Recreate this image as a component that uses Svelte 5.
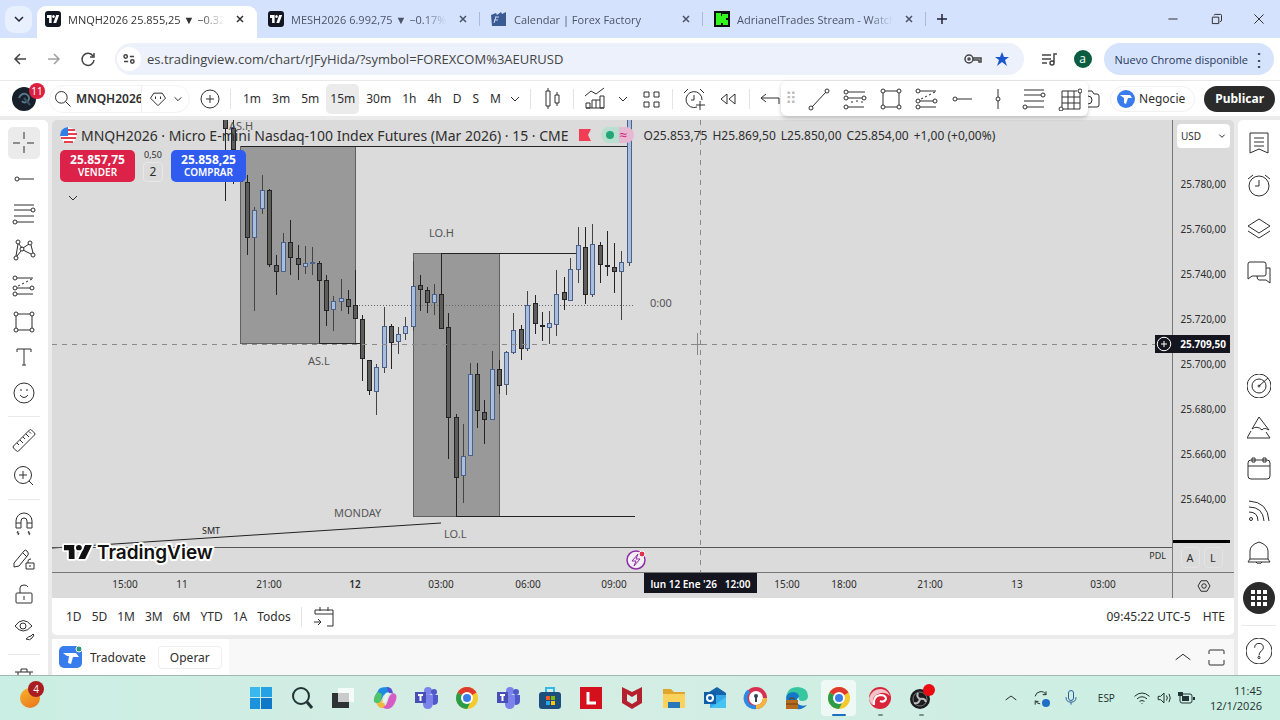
<script lang="ts">
  type Candle = [x: number, high: number, low: number, top: number, bottom: number, up: number];

  const ring = (x: number, y: number, r = 2) =>
    `M${x - r} ${y}a${r} ${r} 0 1 0 ${2 * r} 0a${r} ${r} 0 1 0 ${-2 * r} 0`;

  // stroke icons on a 24px grid
  const ICONS: Record<string, string> = {
    cross: 'M12 1v7M12 15v7M1 12h7M15 12h7',
    hray: 'M7 12h15' + ring(5, 12),
    fib: 'M2 3h20M2 8h17M2 14h20M5 20h17' + ring(21, 8) + ring(3, 20),
    pattern: 'M4 18 6 6M7 6l3 4M11 10l6-4M19 7l2 8M19 16l-8-4M9 13l-4 5' + ring(6, 4) + ring(18, 5) + ring(10, 11) + ring(4, 20) + ring(21, 17),
    projection: 'M5 4h16M5 14h13M5 20h16M6 12l2-1M10 10l2-1M14 8l2-1M18 6l2-1' + ring(3, 4) + ring(3, 14) + ring(20, 14) + ring(3, 20),
    rect: 'M6 4h12M6 20h12M4 6v12M20 6v12' + ring(4, 4) + ring(20, 4) + ring(4, 20) + ring(20, 20),
    text: 'M5 7V4h14v3M12 4v16M10 20h4',
    smile: ring(12, 12, 10) + 'M8 14q4 5 8 0M9 8v2M15 8v2',
    ruler: 'M1.500 18 17.500 2q1-1 2 0l3 3q1 1 0 2l-16 16q-1 1-2 0l-3-3q-1-1 0-2ZM5 15l2 2M8 12l3 3M11 9l2 2M14 6l3 3M17 3.500l2 2',
    zoom: ring(11, 11, 8.5) + 'M17 17l4 4M11 7v8M7 11h8',
    magnet: 'M4 17V10a8 8 0 0 1 16 0v7h-5v-7a3 3 0 0 0-6 0v7ZM4 12h5M15 12h5M6 20l-1 2h2l-1 2M17 20l-1 2h2l-1 2',
    pencil: 'M2 16 12 4q1-2 3 0t1 4L7 19l-5 1ZM11 6l4 4M14 16h8v6h-8ZM16 16v-2q0-2 3-2M18 18v2',
    unlock: 'M5 10h14q1 0 1 1v8q0 1-1 1H5q-1 0-1-1v-8q0-1 1-1ZM8 10V5q0-3 4-3 3 0 4 2M12 13v4',
    eye: 'M3 7q8-11 17 0-9 10-17 0Z' + ring(11, 7, 3) + 'M14 20q3-3 5-3l2-2 1 1-2 3q-2 3-6 1Z',
    trash: 'M3 6h18M9 6V3h6v3M6 6v15h12V6',
    list: 'M3 2h18v20l-9-4-9 4ZM7 7h10M7 11h10M7 15h10',
    alarm: ring(12, 12, 10) + 'M12 6v6H8M1 5l5-4M23 5l-5-4',
    layers: 'M1 9l11-7 11 7-11 7ZM1 14l11 7 11-7',
    chat: 'M3 2h14q2 0 2 2v10q0 2-2 2H5l-4 3V4q0-2 2-2ZM19 8h4v15l-4-3h-7q-2 0-2-4',
    target: ring(12, 12, 12) + ring(12, 12, 7) + ring(12, 12, 1) + 'M12 12l9-8',
    peaks: 'M5 13 12 1l10 13q-5-3-7 0-5-5-10-1ZM4 15l-4 7h23l-4-6',
    calendar: 'M4 3h16q3 0 3 3v13q0 3-3 3H4q-3 0-3-3V6q0-3 3-3ZM1 9h22M5 1h3v4H5ZM16 1h3v4h-3Z',
    feed: ring(4, 20, 1.5) + 'M2 13q9 0 9 9M2 8q14 0 15 14M2 2q19 1 20 20',
    bell: 'M3 19V11q0-6 9-9 9 3 9 9v8l2 3H1l2-3ZM9 22q3 4 6 0M3 19h18',
    help: ring(12, 12, 12) + 'M8 9q0-4 4-4t4 4q0 2-2 3-2 2-2 4' + ring(12, 18, 1),
    trend: 'M5 20 19 5' + ring(4, 21) + ring(20, 4),
    channel: 'M5 5h17M5 11h14M5 20h16M8 15h2M13 14h2M18 15h2' + ring(3, 5) + ring(3, 11) + ring(21, 11) + ring(3, 20),
    vline: 'M12 2v8M12 14v8' + ring(12, 12),
    grid: 'M4 4h15M4 10h18M4 16h18M5 22h17M4 4v16M10 4v18M16 4v18M22 6v16' + ring(22, 4) + ring(3, 22),
    candles: 'M6 4h4v15H6ZM8 1v3M8 19v3M15 8h4v8h-4ZM17 5v3M17 16v3',
    indicators: 'M2 9l6-5 5 3 8-6M3 21v-5h4v5ZM9 21v-8h4v8M13 13h4v8h4V9h-4v4M3 21h18',
    layouts: 'M5 5h5v5H5ZM15 5h5v5h-5ZM5 15h5v5H5ZM15 15h5v5h-5Z',
    addAlarm: 'M15 20a8 8 0 1 1 5-7M12 8v5H9M2 6l4-4M22 6l-4-4M18 14v9M14 18h9',
    rewind: 'M11 7l-6 5 6 5ZM19 7l-6 5 6 5Z',
    undo: 'M8 7l-5 4 5 4M3 11h18v6',
    camera: 'M2 7h5l2-3h6l2 3h3q2 0 2 2v9q0 2-2 2H2Z' + ring(11, 13, 4),
    search: ring(10, 10, 7) + 'M15 15l6 6',
    badge: 'M7 5h10l4 6-9 9-9-9ZM9 9v3M15 9v3',
    down: 'M8 10l4 4 4-4',
    up: 'M4 15l8-6 8 6',
    plus: ring(12, 12, 9) + 'M12 8v8M8 12h8',
    goto: 'M3 9V5h18v16h-6M3 9h18M8 2v4M16 2v4M2 17h7M6 14l3 3-3 3',
    expand: 'M5 9V6q0-1 1-1h3M15 5h4q1 0 1 1v3M20 15v4q0 1-1 1h-4M9 20H6q-1 0-1-1v-4M9 5h6M9 20h6',
    gear: 'M8 5h8l4 7-4 7H8l-4-7Z' + ring(12, 12, 3),
    back: 'M18 12H7M12 7l-5 5 5 5',
    forward: 'M6 12h11M12 7l5 5-5 5',
    reload: 'M17 9a6 6 0 1 0 1 4M18 6v4h-4',
    close: 'M8 8l8 8M16 8l-8 8',
    add: 'M12 7v10M7 12h10',
    minimize: 'M7 12h10',
    restore: 'M8 10h7v7H8ZM10 8q0-1 1-1h6q1 0 1 1v6l-2 1',
    closeWindow: 'M7 7l10 10M17 7 7 17',
    tune: ring(8, 9) + 'M13 9h5' + ring(16, 15) + 'M6 15h5',
    key: ring(9, 12, 4) + ring(9, 12, 1) + 'M13 11h8v4h-2v-2h-6',
    queue: 'M5 8h9M5 12h9M5 16h5M17 16V7h3' + ring(15, 16, 2),
    sync: 'M5 10a7 7 0 0 1 13-2M18 4v4h-4M5 20v-4h4M5 15a7 7 0 0 0 6 4',
    mic: 'M9 6a3 3 0 0 1 6 0v6a3 3 0 0 1-6 0ZM6 11q0 6 6 6t6-6M12 17v3',
    wifi: 'M3 10q9-8 18 0M6 13q6-5 12 0M9 16q3-2 6 0M12 18v1',
    volume: 'M5 10h3l4-4v12l-4-4H5ZM15 9q2 3 0 6M18 7q3 5 0 10',
  };

  const tabs = [
    { title: 'MNQH2026 25.855,25 ▼ −0.32%', kind: 'tv' },
    { title: 'MESH2026 6.992,75 ▼ −0.17%', kind: 'tv' },
    { title: 'Calendar | Forex Factory', kind: 'ff' },
    { title: 'AdrianelTrades Stream - Watch', kind: 'kick' },
  ];
  const intervals = ['1m', '3m', '5m', '15m', '30m', '1h', '4h', 'D', 'S', 'M'];
  const favorites = ['trend', 'channel', 'rect', 'projection', 'hray', 'vline', 'fib', 'grid'];
  const drawing = ['cross', 'hray', 'fib', 'pattern', 'projection', 'rect', 'text', 'smile'];
  const measure = ['ruler', 'zoom'];
  const locks = ['magnet', 'pencil', 'unlock', 'eye'];
  const widgetsTop = ['list', 'alarm', 'layers', 'chat'];
  const widgetsBottom = ['target', 'peaks', 'calendar', 'feed', 'bell'];
  const prices = ['25.780,00', '25.760,00', '25.740,00', '25.720,00', '25.700,00', '25.680,00', '25.660,00', '25.640,00'];
  const ranges = ['1D', '5D', '1M', '3M', '6M', 'YTD', '1A', 'Todos'];
  const times: [number, string][] = [
    [73, '15:00'], [130, '11'], [217, '21:00'], [303, '12'], [389, '03:00'], [476, '06:00'],
    [562, '09:00'], [735, '15:00'], [792, '18:00'], [878, '21:00'], [965, '13'], [1051, '03:00'],
  ];
  const apps = ['windows', 'search', 'tasks', 'copilot', 'teams', 'chrome', 'teams', 'store', 'lenovo', 'mcafee',
    'folder', 'outlook', 'lock', 'edge', 'chrome', 'swirl', 'obs'];

  const candles: Candle[] = [
    [173, -2, 81, -2, 9, 0], [181, 0, 64, 8, 30, 0], [188, 35, 62, 40, 62, 0], [195, 55, 135, 62, 118, 0],
    [202, 87, 191, 90, 118, 1], [210, 55, 94, 70, 89, 1], [217, 69, 147, 70, 145, 0], [224, 135, 175, 145, 152, 0],
    [231, 113, 152, 122, 152, 1], [238, 100, 155, 122, 138, 0], [246, 125, 160, 138, 145, 0], [253, 126, 154, 143, 147, 1],
    [260, 127, 155, 142, 144, 1], [267, 141, 161, 143, 161, 0], [274, 155, 206, 160, 191, 0], [281, 176, 211, 181, 190, 1],
    [289, 159, 191, 178, 182, 1], [296, 170, 194, 179, 187, 0], [303, 150, 199, 185, 199, 0], [310, 195, 261, 199, 239, 0],
    [317, 240, 275, 240, 271, 0], [324, 244, 295, 247, 272, 1], [332, 187, 253, 206, 248, 1], [339, 204, 249, 206, 223, 0],
    [346, 207, 234, 214, 222, 1], [353, 197, 220, 206, 214, 1], [361, 141, 211, 166, 207, 1], [368, 155, 191, 165, 170, 0],
    [375, 167, 193, 170, 183, 0], [382, 164, 195, 174, 183, 1], [389, 133, 209, 174, 209, 0], [396, 193, 339, 207, 298, 0],
    [404, 294, 397, 297, 358, 0], [411, 304, 383, 336, 356, 1], [418, 243, 336, 254, 336, 1], [425, 243, 308, 254, 291, 0],
    [432, 280, 324, 292, 300, 0], [440, 231, 300, 249, 300, 1], [447, 240, 274, 249, 266, 0], [454, 231, 275, 232, 265, 1],
    [461, 193, 234, 210, 233, 1], [469, 205, 240, 209, 229, 0], [475, 171, 231, 185, 229, 1], [483, 175, 214, 183, 204, 0],
    [490, 192, 221, 205, 207, 0], [497, 191, 224, 203, 208, 1], [504, 150, 216, 174, 205, 1], [512, 157, 190, 172, 180, 0],
    [518, 138, 181, 149, 181, 1], [526, 107, 163, 125, 150, 1], [533, 107, 184, 127, 175, 0], [540, 104, 177, 124, 175, 1],
    [548, 122, 163, 125, 145, 0], [555, 111, 156, 145, 147, 0], [562, 123, 173, 147, 152, 0], [569, 131, 200, 142, 152, 1],
    [577, -4, 146, -4, 143, 1],
  ];

  let interval = $state('15m');
  let url = $state('es.tradingview.com/chart/rJFyHida/?symbol=FOREXCOM%3AEURUSD');
  let currency = $state('USD');
</script>

{#snippet icon(name: string, size = 24)}
  <svg class="icon" width={size} height={size} viewBox="0 0 24 24" aria-hidden="true"><path d={ICONS[name]} /></svg>
{/snippet}

{#snippet tvMark()}
  <path d="M0 0h11v16H5V6H0ZM22 0h7l-7 16h-7Z" /><circle cx="15.500" cy="3" r="3" />
{/snippet}

{#snippet favicon(kind: string)}
  <svg class="favicon" width="16" height="16" viewBox="0 0 16 16" aria-hidden="true">
    {#if kind === 'tv'}
      <rect width="16" height="16" rx="3" fill="#131722" />
      <g fill="#fff" transform="translate(2 4) scale(.42 .5)">{@render tvMark()}</g>
    {:else if kind === 'ff'}
      <path d="M0 4l5-2 1 2 4-3 1 2 4-2v14H1Z" fill="#3b5a94" />
      <path d="M4 6h4M3 9h4M5 6l-2 6" stroke="#c9d6f0" fill="none" />
    {:else}
      <rect width="16" height="16" fill="#0b0f0b" />
      <path d="M2 2h5v3h1V3h6v4h-2v2h2v5H9v-2H7v2H2Z" fill="#31f51c" />
    {/if}
  </svg>
{/snippet}

{#snippet app(kind: string)}
  <svg class="app-icon" width="24" height="24" viewBox="0 0 24 24" aria-hidden="true">
    {#if kind === 'windows'}
      <path d="M1 1h10v10H1Z" fill="#39b8ef" /><path d="M12 1h11v10H12Z" fill="#23a3e4" />
      <path d="M1 12h10v11H1Z" fill="#1b92dc" /><path d="M12 12h11v11H12Z" fill="#0f78c8" />
    {:else if kind === 'search'}
      <circle cx="11" cy="10" r="8" fill="none" stroke="#233" stroke-width="2" />
      <path d="M17 16l5 6" stroke="#233" stroke-width="3" />
    {:else if kind === 'tasks'}
      <path d="M1 7h17v15H1Z" fill="#2d3433" /><path d="M7 2h16v14H7Z" fill="#fff" opacity=".75" />
    {:else if kind === 'copilot'}
      <path d="M6 3q2-2 8-2 3 0 4 4l-5 2q-3 2-4 6-2 4-5 3-4-1-2-6Z" fill="#1c8de0" />
      <path d="M1 13q1-5 4-7l4 2-1 7q-2 3-5 2-3-1-2-4Z" fill="#4fc46a" />
      <path d="M3 17q5 1 6-4l4 8q-5 3-8-1Z" fill="#f4b73e" />
      <path d="M10 21q3 0 5-7 1-5 5-7 5 1 3 7-3 9-9 9-3 0-4-2Z" fill="#d75bc4" />
      <path d="M14 1q5 0 6 6-3 1-5-1Z" fill="#574fd0" />
      <path d="M13 7l3 0-3 9-4 1Z" fill="#e8f4f0" />
    {:else if kind === 'teams'}
      <circle cx="14" cy="5" r="4" fill="#7b83eb" /><circle cx="20" cy="6" r="3" fill="#5059c9" />
      <path d="M9 9h10v9q-1 5-5 5-5 0-5-5Z" fill="#7b83eb" /><path d="M19 9h5v6q0 4-5 4Z" fill="#5059c9" />
      <path d="M1 6h11v11H1Z" fill="#464eb8" /><path d="M4 9h5M6.500 9v6" stroke="#fff" stroke-width="2" />
    {:else if kind === 'chrome'}
      <circle cx="12" cy="12" r="11" fill="#f6c92d" />
      <path d="M12 12 2.500 6.500a11 11 0 0 1 19 0Z" fill="#e0392d" />
      <path d="M12 12 2.500 6.500A11 11 0 0 0 12 23l4-8Z" fill="#2b9c4a" />
      <circle cx="12" cy="12" r="6" fill="#fff" /><circle cx="12" cy="12" r="4" fill="#3b7de8" />
    {:else if kind === 'store'}
      <path d="M8 6V2h8v4" fill="none" stroke="#37b7e8" stroke-width="2" /><rect x="1" y="6" width="22" height="17" rx="3" fill="#1d4f7c" />
      <path d="M8 10h4v4H8Z" fill="#f05a28" /><path d="M13 10h4v4h-4Z" fill="#7fba00" /><path d="M8 15h4v4H8Z" fill="#2aa7e8" /><path d="M13 15h4v4h-4Z" fill="#ffc20e" />
    {:else if kind === 'lenovo'}
      <path d="M1 1h22v22H1Z" fill="#d3101c" /><path d="M9 6v11h8" fill="none" stroke="#fff" stroke-width="3" />
    {:else if kind === 'mcafee'}
      <path d="M2 1l10 5 10-5v16l-10 6-10-6Z" fill="#b5202f" /><path d="M7 8l5 3 5-3v7l-5 3-5-3Z" fill="#d5efe5" />
    {:else if kind === 'folder'}
      <path d="M1 3h8l3 3h11v15H1Z" fill="#e0a52c" /><path d="M1 8h22v14H1Z" fill="#fbd25c" /><path d="M6 16h12v6H6Z" fill="#2678b8" />
    {:else if kind === 'outlook'}
      <path d="M6 6l8-5 9 6v5H6Z" fill="#1563a8" /><path d="M7 9h16v13H7Z" fill="#35a7e8" /><path d="M7 22l16-11v11Z" fill="#46c3f2" />
      <path d="M1 6h12v12H1Z" fill="#0f5ea8" /><circle cx="7" cy="12" r="3" fill="none" stroke="#fff" stroke-width="2" />
    {:else if kind === 'lock'}
      <circle cx="12" cy="12" r="9" fill="#fff" stroke="#d8304e" stroke-width="4" />
      <path d="M5 5a9 9 0 0 0 7 16" fill="none" stroke="#2f89e3" stroke-width="4" /><path d="M12 21a9 9 0 0 0 9-9" fill="none" stroke="#f5b63c" stroke-width="4" />
      <circle cx="12" cy="10" r="2" fill="#345" /><path d="M12 11v5" stroke="#345" stroke-width="2" />
    {:else if kind === 'edge'}
      <path d="M1 12Q2 1 13 1q10 1 10 9 0 5-6 5-4 0-3-4-4-5-13 1Z" fill="#36c6a0" />
      <path d="M1 12q1-6 8-6 5 1 5 5-4 3-1 7 4 3 9 1-4 5-11 4Q1 21 1 12Z" fill="#1677c8" />
      <path d="M1 14h12v9H1Z" fill="#b56b1e" /><path d="M1 18h12M5 14v-2h4v2" stroke="#6b3b12" fill="none" />
    {:else if kind === 'swirl'}
      <circle cx="12" cy="12" r="11" fill="#d9243a" />
      <path d="M1 12Q4 3 13 3q7 1 9 7-4-4-9-3-9 1-8 12-4-3-4-7Z" fill="#f3c4c9" />
      <path d="M6 19q-1-9 6-10 6 0 6 4-2 4-6 2" fill="none" stroke="#fff" stroke-width="2" />
    {:else}
      <circle cx="11" cy="13" r="10" fill="#1c1c1f" /><circle cx="11" cy="13" r="7" fill="none" stroke="#777" />
      <path d="M11 13q-4-2-2-6M11 13q5-1 6 3M11 13q-1 5-6 4" stroke="#bbb" stroke-width="2" fill="none" />
      <circle cx="20" cy="4" r="6" fill="#ec0b12" />
    {/if}
  </svg>
{/snippet}

<div class="screen">
  <header class="tab-strip">
    <button class="tab-search" aria-label="Buscar pestañas">{@render icon('down')}</button>
    <div class="tabs">
      {#each tabs as tab, i}
        <div class="tab" class:active={i === 0}>
          {@render favicon(tab.kind)}
          <span class="tab-title">{tab.title}</span>
          <button class="bare" aria-label="Cerrar pestaña">{@render icon('close', 18)}</button>
        </div>
      {/each}
    </div>
    <button class="bare new-tab" aria-label="Nueva pestaña">{@render icon('add')}</button>
    <div class="window-buttons">
      <button class="bare" aria-label="Minimizar">{@render icon('minimize', 22)}</button>
      <button class="bare" aria-label="Restaurar">{@render icon('restore', 22)}</button>
      <button class="bare" aria-label="Cerrar">{@render icon('closeWindow', 22)}</button>
    </div>
  </header>

  <div class="address-bar">
    <div class="nav-buttons">
      <button class="bare" aria-label="Atrás">{@render icon('back')}</button>
      <button class="bare faded" aria-label="Adelante">{@render icon('forward')}</button>
      <button class="bare" aria-label="Recargar">{@render icon('reload')}</button>
    </div>
    <div class="omnibox">
      <span class="site-info">{@render icon('tune', 20)}</span>
      <input aria-label="Dirección" bind:value={url} spellcheck="false" />
      <button class="bare" aria-label="Contraseñas">{@render icon('key')}</button>
      <button class="bare star" aria-label="Marcador">
        <svg width="16" height="16" viewBox="0 0 16 16"><path d="M8 1l2 5h5l-4 3 2 6-5-4-5 4 2-6-4-3h5Z" fill="#1a56d0" /></svg>
      </button>
    </div>
    <button class="bare" aria-label="Multimedia">{@render icon('queue')}</button>
    <button class="profile" aria-label="Perfil">a</button>
    <button class="update">Nuevo Chrome disponible <span class="kebab">⋮</span></button>
  </div>

  <div class="toolbar">
    <button class="bare avatar" aria-label="Menú">
      <svg width="26" height="26" viewBox="0 0 26 26"><circle cx="13" cy="13" r="12" fill="#17202a" /><path d="M8 12q2-5 7-4 5 3 2 7-4 3-6 0" stroke="#56748a" fill="none" stroke-width="2" /><path d="M13 12l6 7" stroke="#3a5264" stroke-width="2" /></svg>
      <span class="count">11</span>
    </button>
    <div class="symbol-pill">
      <button class="bare symbol">{@render icon('search', 20)}<span>MNQH2026</span></button>
      <button class="bare compare" aria-label="Listas">{@render icon('badge', 20)}{@render icon('down', 20)}</button>
    </div>
    <button class="bare" aria-label="Comparar">{@render icon('plus')}</button>
    <i class="sep"></i>
    <div class="intervals">
      {#each intervals as item}
        <button class="bare interval" class:selected={item === interval} onclick={() => (interval = item)}>{item}</button>
      {/each}
      <button class="bare chevron" aria-label="Más intervalos">{@render icon('down')}</button>
    </div>
    <i class="sep"></i>
    <button class="bare mid" aria-label="Velas">{@render icon('candles')}</button>
    <i class="sep"></i>
    <button class="bare mid" aria-label="Indicadores">{@render icon('indicators')}</button>
    <button class="bare chevron" aria-label="Favoritos">{@render icon('down')}</button>
    <button class="bare mid" aria-label="Plantillas">{@render icon('layouts')}</button>
    <i class="sep"></i>
    <button class="bare mid" aria-label="Alerta">{@render icon('addAlarm')}</button>
    <button class="bare mid" aria-label="Reproducción">{@render icon('rewind')}</button>
    <i class="sep"></i>
    <button class="bare" aria-label="Deshacer">{@render icon('undo')}</button>
    <div class="toolbar-right">
      <button class="bare" aria-label="Instantánea">{@render icon('camera')}</button>
      <button class="trade">
        <svg width="18" height="18" viewBox="0 0 18 18"><circle cx="9" cy="9" r="9" fill="#387ced" /><path d="M3 5h10l2 3h-4l-2 6-2-1V8Z" fill="#fff" /></svg>
        Negocie
      </button>
      <button class="publish">Publicar</button>
    </div>
    <div class="favorites">
      <span class="grip">⠿</span>
      {#each favorites as name}
        <button class="bare" aria-label={name}>{@render icon(name)}</button>
      {/each}
    </div>
  </div>

  <main class="workspace">
    <nav class="rail">
      <div class="rail-group drawing">
        {#each drawing as name, i}
          <button class="bare tool" class:selected={i === 0} aria-label={name}>{@render icon(name)}</button>
        {/each}
      </div>
      <div class="rail-group">
        {#each measure as name}
          <button class="bare tool" aria-label={name}>{@render icon(name)}</button>
        {/each}
      </div>
      <div class="rail-group">
        {#each locks as name}
          <button class="bare tool" aria-label={name}>{@render icon(name)}</button>
        {/each}
      </div>
      <div class="rail-group">
        <button class="bare tool" aria-label="trash">{@render icon('trash')}</button>
      </div>
    </nav>

    <div class="center">
      <section class="chart">
        <div class="plot">
          <svg class="canvas" width="100%" height="100%" aria-label="MNQH2026 15m">
            <rect class="zone" x="188.500" y="26.500" width="115" height="197" />
            <rect class="zone" x="361.500" y="133.500" width="86" height="263" />
            <g class="levels">
              <path d="M189 26.500H577M267.500 161v62.500H311M389.500 174v-40.500H526M404 396.500H583" />
              <path d="M0 428 389 403" />
            </g>
            <path class="dotted" d="M304 185.500H583" />
            {#each candles as [x, high, low, top, bottom, up]}
              <g class={up ? 'up' : 'down'}>
                <path d="M{x + 0.5} {high}V{low}" />
                <rect x={x - 1.5} y={top + 0.5} width="4" height={Math.max(bottom - top - 1, 1)} />
              </g>
            {/each}
            <line class="pdl" x1="0" x2="100%" y1="427.500" y2="427.500" />
            <line class="cursor" x1="0" x2="100%" y1="224.500" y2="224.500" />
            <line class="cursor" x1="648.500" x2="648.500" y1="0" y2="100%" />
            <path class="cross" d="M639 224.500h12M645.500 213v22" />
            <g class="labels">
              <text x="177" y="10">AS.H</text>
              <text x="256" y="245">AS.L</text>
              <text x="377" y="117">LO.H</text>
              <text x="392" y="418">LO.L</text>
              <text x="282" y="397">MONDAY</text>
              <text x="598" y="187">0:00</text>
              <text class="small" x="150" y="414">SMT</text>
            </g>
            <g class="brand">
              <g transform="translate(12 425) scale(.96 .88)">{@render tvMark()}</g>
              <text x="45" y="439">TradingView</text>
            </g>
            <g transform="translate(584 440)">
              <circle r="9" fill="#f4eef6" stroke="#8d2fa5" stroke-width="1.500" />
              <path d="M2-6l-6 7h4l-2 5 6-7H0Z" fill="none" stroke="#8d2fa5" />
              <circle cx="6" cy="-6" r="3" fill="#e0304f" stroke="#fff" />
            </g>
          </svg>
          <span class="pdl-tag">PDL</span>
          <div class="legend">
            <div class="legend-row">
              <svg width="17" height="17" viewBox="0 0 17 17">
                <circle cx="8.500" cy="8.500" r="8" fill="#fff" />
                <path d="M8 3h7M8 7h9M1 11h15M4 15h9" stroke="#e5404d" stroke-width="2" />
                <path d="M8 0v9H0Q0 1 8 0Z" fill="#2f7fe6" />
              </svg>
              <h1>MNQH2026 · Micro E-mini Nasdaq-100 Index Futures (Mar 2026) · 15 · CME</h1>
              <svg class="flag" width="12" height="12" viewBox="0 0 12 12"><path d="M0 0h12L9 6l3 6H0Z" fill="#f23d55" /></svg>
              <span class="status"><b></b><em>≈</em></span>
              <p class="ohlc">
                <span>O25.853,75</span><span>H25.869,50</span><span>L25.850,00</span><span>C25.854,00</span><span>+1,00 (+0,00%)</span>
              </p>
            </div>
            <div class="legend-row orders">
              <button class="order sell"><strong>25.857,75</strong>VENDER</button>
              <div class="spread"><span>0,50</span><button class="qty">2</button></div>
              <button class="order buy"><strong>25.858,25</strong>COMPRAR</button>
            </div>
            <button class="bare collapse" aria-label="Contraer">{@render icon('down')}</button>
          </div>
        </div>

        <aside class="price-axis">
          <label class="currency">
            <select aria-label="Moneda" bind:value={currency}><option>USD</option></select>
            {@render icon('down', 16)}
          </label>
          <ul>
            {#each prices as price}<li>{price}</li>{/each}
          </ul>
          <div class="cursor-price">{@render icon('plus', 18)}<span>25.709,50</span></div>
          <div class="axis-modes"><button>A</button><button>L</button></div>
        </aside>

        <div class="time-axis">
          <svg width="100%" height="26">
            {#each times as [x, label]}
              <text {x} y="15" class:day={label === '12'}>{label}</text>
            {/each}
          </svg>
          <span class="cursor-time">lun 12 Ene '26 &nbsp; 12:00</span>
        </div>
        <div class="axis-settings">
          <button class="bare" aria-label="Ajustes">{@render icon('gear', 18)}</button>
        </div>
      </section>

      <div class="range-bar">
        {#each ranges as range}<button class="bare">{range}</button>{/each}
        <i class="sep"></i>
        <button class="bare" aria-label="Ir a">{@render icon('goto')}</button>
        <button class="bare clock">09:45:22 UTC-5</button>
        <button class="bare">HTE</button>
      </div>

      <div class="broker-bar">
        <div class="broker">
          <span class="broker-logo">
            <svg width="24" height="24" viewBox="0 0 24 24"><rect y="1" width="23" height="22" rx="5" fill="#387ced" /><path d="M4 8h13l3 4h-6l-2 7-3-1 1-7H8Z" fill="#fff" /><circle cx="20" cy="4" r="3" fill="#2a9b76" stroke="#fff" /></svg>
          </span>
          <span>Tradovate</span>
          <button class="operate">Operar</button>
        </div>
        <div class="broker-actions">
          <button class="bare" aria-label="Abrir panel">{@render icon('up', 22)}</button>
          <button class="bare" aria-label="Maximizar">{@render icon('expand', 24)}</button>
        </div>
      </div>
    </div>

    <nav class="widgets">
      <div class="widget-group top">
        {#each widgetsTop as name}<button class="bare" aria-label={name}>{@render icon(name)}</button>{/each}
      </div>
      <div class="widget-group bottom">
        {#each widgetsBottom as name}<button class="bare" aria-label={name}>{@render icon(name)}</button>{/each}
        <button class="bare" aria-label="Productos">
          <svg width="32" height="32" viewBox="0 0 32 32"><circle cx="16" cy="16" r="16" fill="#2b2b2b" /><path d="M8 8h4v4H8ZM14 8h4v4h-4ZM20 8h4v4h-4ZM8 14h4v4H8ZM14 14h4v4h-4ZM20 14h4v4h-4ZM8 20h4v4H8ZM14 20h4v4h-4ZM20 20h4v4h-4Z" fill="#fff" /></svg>
        </button>
      </div>
      <button class="bare help" aria-label="Ayuda">{@render icon('help', 26)}</button>
    </nav>
  </main>

  <footer class="taskbar">
    <div class="weather">
      <button class="bare weather-button" aria-label="Widgets"><span class="sun"></span><span class="count">4</span></button>
    </div>
    <div class="apps">
      {#each apps as kind, i}
        <button class="bare app" class:current={i === 14} class:running={i > 14} aria-label={kind}>{@render app(kind)}</button>
      {/each}
    </div>
    <div class="tray">
      <button class="bare" aria-label="Iconos ocultos">{@render icon('up', 16)}</button>
      <span class="sync">{@render icon('sync', 20)}</span>
      <span class="mic">{@render icon('mic', 20)}</span>
      <span class="lang">ESP</span>
      <span class="status-icons">
        {@render icon('wifi', 20)}{@render icon('volume', 20)}
        <svg width="20" height="16" viewBox="0 0 20 16"><rect x="4" y="4" width="12" height="9" rx="2" fill="none" stroke="#233" /><path d="M6 6h7v5H6ZM17 7h2v3h-2ZM2 2h5v4H2Z" fill="#233" /></svg>
      </span>
      <time>11:45<br />12/1/2026</time>
    </div>
  </footer>
</div>

<style>
  :global(body) {
    background: #ebebeb;
  }

  .screen {
    height: 100vh;
    display: flex;
    flex-direction: column;
    overflow: hidden;
    background: #ebebeb;
    font-family: "Noto Sans", "Open Sans", sans-serif;
    font-size: 12px;
    color: #2e2e2e;
  }

  button, input, select {
    font: inherit;
    color: inherit;
    border: 0;
    margin: 0;
    padding: 0;
    cursor: pointer;
  }

  .bare {
    background: none;
    display: flex;
    align-items: center;
    justify-content: center;
    flex: none;
  }

  .icon {
    flex: none;
    fill: none;
    stroke: currentColor;
    stroke-width: 1;
  }

  .icon path { vector-effect: non-scaling-stroke; }

  .sep {
    width: 1px;
    height: 20px;
    background: #e4e4e4;
    flex: none;
  }

  /* browser */
  .tab-strip {
    height: 38px;
    flex: none;
    display: flex;
    align-items: center;
    background: #d5e2fd;
    font-family: "Open Sans", "Noto Sans", sans-serif;
    font-size: 11px;
    color: #4a5468;
  }

  .tab-search {
    width: 27px;
    height: 27px;
    margin: 0 5px;
    display: grid;
    place-items: center;
    border-radius: 9px;
    background: #e8f0fe;
    color: #223;
  }

  .tabs {
    display: flex;
    gap: 3px;
    align-self: flex-end;
  }

  .tab {
    width: 220px;
    height: 32px;
    box-sizing: border-box;
    padding: 0 8px 6px;
    display: flex;
    align-items: center;
    gap: 7px;
    position: relative;
  }

  .tab.active {
    background: #fff;
    border-radius: 9px 9px 0 0;
    color: #333;
  }

  .tab:not(.active)::after {
    content: '';
    position: absolute;
    right: 0;
    width: 1px;
    height: 14px;
    background: #a9bbdd;
  }

  .favicon { flex: none; }

  .tab-title {
    flex: 1;
    min-width: 0;
    overflow: hidden;
    white-space: nowrap;
    mask-image: linear-gradient(90deg, #000 85%, transparent);
  }

  .tab-strip .icon { stroke-width: 1.5px; }
  .new-tab { margin-left: 4px; color: #223; }

  .window-buttons {
    display: flex;
    gap: 21px;
    margin: 0 10px 0 auto;
    color: #333;
  }

  .window-buttons .icon { stroke-width: 1px; }

  .address-bar {
    height: 42px;
    flex: none;
    display: flex;
    align-items: center;
    gap: 10px;
    padding: 0 6px 0 8px;
    background: #fff;
    border-bottom: 1px solid #e8e8e8;
    font-family: "Open Sans", "Noto Sans", sans-serif;
    color: #444;
  }

  .address-bar .icon { stroke-width: 1.5px; }

  .nav-buttons {
    display: flex;
    gap: 10px;
  }

  .faded { opacity: 0.5; }

  .omnibox {
    flex: 1;
    height: 32px;
    display: flex;
    align-items: center;
    gap: 6px;
    margin: 0 3px 0 5px;
    padding: 0 14px 0 2px;
    border-radius: 16px;
    background: #ecf1fc;
  }

  .site-info {
    width: 24px;
    height: 24px;
    display: grid;
    place-items: center;
    border-radius: 50%;
    background: #fff;
  }

  .omnibox input {
    flex: 1;
    background: none;
    outline: none;
    font-size: 13px;
    cursor: text;
  }

  .star { margin-left: 4px; }

  .profile {
    width: 18px;
    height: 18px;
    margin: 0 2px 0 3px;
    border-radius: 50%;
    background: #0b5c41;
    color: #fff;
    line-height: 16px;
  }

  .update {
    height: 32px;
    display: flex;
    align-items: center;
    gap: 9px;
    padding: 0 13px 0 11px;
    border-radius: 16px;
    background: #d5e3fd;
    color: #2a3a5c;
    font-size: 11px;
  }

  .kebab {
    width: 4px;
    display: flex;
    justify-content: center;
    font-size: 18px;
    line-height: 20px;
  }

  /* chart toolbar */
  .toolbar {
    height: 35px;
    flex: none;
    display: flex;
    align-items: center;
    gap: 8px;
    padding: 0 5px 0 11px;
    margin-bottom: 4px;
    background: #fff;
    position: relative;
  }

  .avatar { position: relative; }

  .count {
    position: absolute;
    top: -3px;
    left: 18px;
    width: 16px;
    height: 16px;
    border-radius: 50%;
    background: #dc2040;
    color: #fff;
    font-size: 10px;
    line-height: 16px;
    text-align: center;
  }

  .symbol-pill {
    width: 141px;
    height: 28px;
    box-sizing: border-box;
    display: flex;
    align-items: center;
    margin-left: 4px;
    padding-left: 3px;
    border: 1px solid #f3f3f3;
    border-radius: 14px;
  }

  .symbol {
    width: 89px;
    height: 28px;
    gap: 3px;
    overflow: hidden;
    justify-content: flex-start;
    border-right: 1px solid #eee;
    font-weight: 600;
  }

  .compare { padding-left: 6px; }

  .intervals {
    display: flex;
    align-items: center;
    gap: 3px;
  }

  .interval {
    height: 30px;
    padding: 0 4px;
    border-radius: 5px;
  }

  .interval.selected { background: #ebebeb; }
  .chevron { width: 14px; }
  .mid { margin: 0 1px; }

  .toolbar-right {
    display: flex;
    align-items: center;
    gap: 9px;
    margin-left: auto;
  }

  .trade {
    height: 26px;
    display: flex;
    align-items: center;
    gap: 4px;
    padding: 0 9px 0 6px;
    border: 1px solid #f1f1f1;
    border-radius: 14px;
    background: #fff;
  }

  .publish {
    height: 26px;
    padding: 0 11px;
    border-radius: 13px;
    background: #2b2b2b;
    color: #fff;
    font-weight: 700;
  }

  .favorites {
    position: absolute;
    z-index: 2;
    top: 0;
    left: 781px;
    width: 307px;
    height: 35px;
    box-sizing: border-box;
    padding-left: 4px;
    display: flex;
    align-items: center;
    border-radius: 6px;
    background: #fff;
    box-shadow: 0 2px 4px #0003;
  }

  .favorites .bare { flex: 1; }

  .grip {
    width: 16px;
    color: #bbb;
    font-family: "DejaVu Sans", sans-serif;
    font-size: 16px;
  }

  /* workspace */
  .workspace {
    flex: 1;
    min-height: 0;
    display: grid;
    grid-template-columns: 48px minmax(0, 1fr) 42px;
    gap: 4px;
  }

  .rail {
    overflow: hidden;
    padding: 7px 8px 0;
    background: #fff;
    border-radius: 0 5px 0 0;
  }

  .rail-group {
    display: flex;
    flex-direction: column;
    gap: 4px;
    padding-bottom: 7px;
    margin-bottom: 7px;
    border-bottom: 1px solid #e8e8e8;
  }

  .drawing {
    height: 282px;
    justify-content: space-between;
    gap: 0;
  }

  .tool {
    height: 32px;
    border-radius: 5px;
  }

  .tool.selected { background: #ebebeb; }

  .center {
    min-height: 0;
    display: flex;
    flex-direction: column;
  }

  .chart {
    flex: 1;
    min-height: 0;
    display: grid;
    grid-template-columns: minmax(0, 1fr) 62px;
    grid-template-rows: minmax(0, 1fr) 26px;
    background: #dbdbdb;
    border-radius: 5px 5px 0 0;
  }

  .plot { position: relative; overflow: hidden; }
  .canvas { display: block; }
  .zone { fill: #999; stroke: #606060; }
  .levels { fill: none; stroke: #222; }
  .dotted { stroke: #666; stroke-dasharray: 1 2; }
  .up { fill: #a9bddd; stroke: #4b618a; }
  .up path { stroke: #444; }
  .down { fill: #5d5d5b; stroke: #242424; }
  .pdl { stroke: #555; }
  .cursor { stroke: #8a8a8a; stroke-dasharray: 5 5; }
  .cross { stroke: #888; }
  .labels { fill: #555; font-size: 11px; }
  .labels .small { font-size: 9px; fill: #222; }

  .brand {
    fill: #111;
    stroke: #fff;
    stroke-width: 4px;
    stroke-linejoin: round;
    paint-order: stroke;
    font-family: Inter, sans-serif;
    font-size: 19px;
    font-weight: 600;
  }

  .pdl-tag {
    position: absolute;
    right: 6px;
    bottom: 9px;
    font-size: 9px;
    line-height: 14px;
  }

  .legend {
    position: absolute;
    top: 5px;
    left: 8px;
  }

  .legend-row {
    display: flex;
    align-items: center;
    height: 20px;
    white-space: nowrap;
  }

  h1 {
    margin: 0 10px 0 4px;
    font-size: 14px;
    font-weight: 400;
  }

  .status {
    display: flex;
    align-items: center;
    width: 33px;
    height: 16px;
    margin: 0 10px;
    border-radius: 8px;
    background: linear-gradient(90deg, #b9dfd0 55%, #e7b8d2 55%);
  }

  .status b {
    width: 8px;
    height: 8px;
    margin: 0 6px 0 5px;
    border-radius: 50%;
    background: #22a679;
  }

  .status em {
    font-style: normal;
    font-size: 14px;
    line-height: 14px;
    color: #d31c7b;
  }

  .ohlc {
    display: flex;
    gap: 5px;
    margin: 0;
  }

  .orders {
    height: 32px;
    margin-top: 5px;
    gap: 8px;
  }

  .order {
    width: 75px;
    height: 32px;
    border-radius: 5px;
    color: #fff;
    font-size: 10px;
    font-weight: 600;
    line-height: 13px;
  }

  .order strong {
    display: block;
    font-size: 12px;
    font-weight: 700;
  }

  .sell { background: #dc2248; }
  .buy { background: #2f5bf0; }

  .spread {
    display: flex;
    flex-direction: column;
    align-items: center;
    font-size: 9px;
    line-height: 10px;
    gap: 2px;
    width: 20px;
  }

  .qty {
    width: 20px;
    height: 20px;
    border: 1px solid #e9e9e9;
    border-radius: 4px;
    background: none;
    font-size: 12px;
  }

  .collapse { margin: 4px 0 0 1px; }

  .price-axis {
    position: relative;
    border-left: 1px solid #777;
    font-size: 10px;
  }

  .currency {
    display: flex;
    align-items: center;
    width: 53px;
    height: 24px;
    margin: 4px 4px 0;
    border-radius: 4px;
    background: #fff;
  }

  .currency select {
    flex: 1;
    appearance: none;
    padding-left: 4px;
    background: none;
  }

  .price-axis ul {
    list-style: none;
    margin: 14px 0 0;
    padding: 0 8px 0 0;
    text-align: right;
  }

  .price-axis li {
    height: 45px;
    line-height: 45px;
  }

  .cursor-price {
    position: absolute;
    top: 215px;
    right: 4px;
    width: 75px;
    height: 18px;
    box-sizing: border-box;
    padding-right: 4px;
    display: flex;
    align-items: center;
    justify-content: space-between;
    background: #14151f;
    color: #fff;
    font-weight: 700;
  }

  .axis-modes {
    position: absolute;
    left: 0;
    right: 4px;
    bottom: 4px;
    padding-top: 4px;
    border-top: 3px solid #000;
    display: flex;
    justify-content: center;
    gap: 4px;
    font-size: 11px;
  }

  .axis-modes button {
    width: 19px;
    height: 21px;
    border: 1px solid #e4e4e4;
    border-radius: 4px;
    background: none;
  }

  .time-axis {
    position: relative;
    border-top: 1px solid #777;
    overflow: hidden;
  }

  .time-axis text {
    font-size: 10px;
    text-anchor: middle;
    fill: #2e2e2e;
  }

  .time-axis .day { font-weight: 600; }

  .cursor-time {
    position: absolute;
    top: 0;
    left: 592px;
    width: 113px;
    height: 20px;
    background: #14151f;
    color: #fff;
    font-size: 10px;
    font-weight: 600;
    line-height: 22px;
    text-align: center;
  }

  .axis-settings {
    display: grid;
    place-items: center;
    border-top: 1px solid #777;
    border-left: 1px solid #777;
  }

  .range-bar {
    height: 37px;
    flex: none;
    display: flex;
    align-items: center;
    gap: 10px;
    padding: 0 9px 0 14px;
    background: #fff;
    border-radius: 0 0 5px 5px;
  }

  .clock { margin: 0 2px 0 auto; }

  .broker-bar {
    height: 36px;
    flex: none;
    display: flex;
    justify-content: space-between;
    margin-top: 4px;
    background: #f8f8f8;
  }

  .broker {
    display: flex;
    align-items: center;
    gap: 7px;
    padding: 0 7px;
    background: #fff;
  }

  .broker-logo { display: flex; }

  .operate {
    height: 23px;
    margin-left: 5px;
    padding: 0 11px;
    border: 1px solid #eee;
    border-radius: 4px;
    background: #fff;
  }

  .broker-actions {
    display: flex;
    gap: 10px;
    padding-right: 6px;
  }

  .widgets {
    min-height: 0;
    display: flex;
    flex-direction: column;
    align-items: center;
    background: #fff;
    border-radius: 5px 0 0 0;
  }

  .widget-group {
    display: flex;
    flex-direction: column;
    justify-content: space-between;
    align-items: center;
  }

  .top { height: 153px; margin-top: 11px; }
  .bottom { height: 240px; margin-top: auto; }

  .help {
    width: 34px;
    height: 50px;
    margin-top: 11px;
    border-top: 1px solid #e8e8e8;
  }

  /* windows taskbar */
  .taskbar {
    height: 44px;
    flex: none;
    display: flex;
    border-top: 1px solid #9fb8b0;
    background: linear-gradient(90deg, #caeee3, #d5ede4 35%, #ccefe3);
    font-family: "Open Sans", "Noto Sans", sans-serif;
    color: #24302d;
  }

  .weather {
    width: 240px;
    display: flex;
    align-items: center;
    padding-left: 20px;
    box-sizing: border-box;
  }

  .weather-button { position: relative; }

  .sun {
    width: 20px;
    height: 20px;
    border-radius: 50%;
    background: linear-gradient(150deg, #f9b32c, #e8731b);
  }

  .weather .count {
    top: -7px;
    left: 8px;
    background: #a81d20;
  }

  .apps {
    width: 702px;
    display: grid;
    grid-template-columns: repeat(17, 1fr);
  }

  .app {
    position: relative;
    margin: 4px 3px;
    border-radius: 4px;
  }

  .app-icon { overflow: visible; }
  .current { background: #eef8f4; }

  .current::after, .running::after {
    content: '';
    position: absolute;
    bottom: 0;
    width: 5px;
    height: 2px;
    border-radius: 1px;
    background: #7d8f89;
  }

  .current::after {
    width: 14px;
    background: #1d6fc0;
  }

  .tray {
    display: flex;
    align-items: center;
    gap: 10px;
    margin-left: auto;
    padding-right: 18px;
    font-size: 11px;
  }

  .tray > .bare { margin-right: 2px; }
  .tray span { display: flex; align-items: center; }
  .sync { position: relative; }

  .sync::after {
    content: '';
    position: absolute;
    right: 1px;
    bottom: 1px;
    width: 8px;
    height: 8px;
    border-radius: 50%;
    background: #1f70c4;
  }

  .mic { color: #2c5f9c; }
  .tray .lang { font-size: 10px; margin: 0 7px; }
  .tray .status-icons { gap: 2px; margin-right: 4px; }
  .tray time { text-align: right; line-height: 15px; }
</style>
